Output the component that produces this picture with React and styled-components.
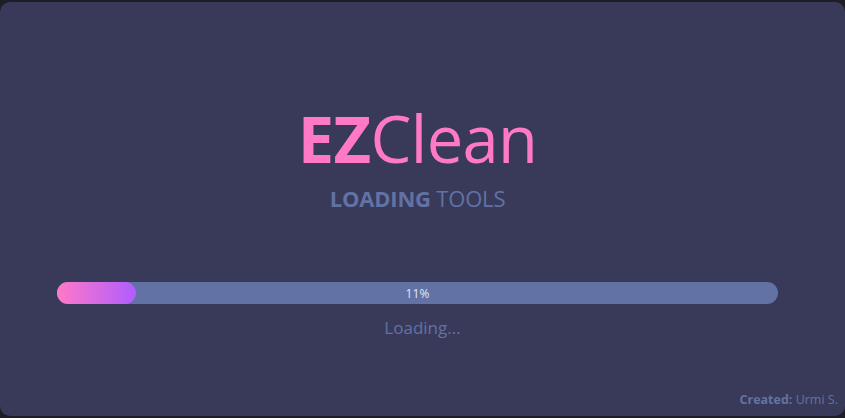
import React from "react";
import styled, { createGlobalStyle } from "styled-components";

const GlobalStyle = createGlobalStyle`
  html, body {
    margin: 0;
    padding: 0;
    background: #1d1e26;
  }
  body {
    font-family: "Open Sans", "Noto Sans", sans-serif;
  }
`;

const Page = styled.div`
  width: 845px;
  height: 418px;
  padding-top: 2px;
  box-sizing: border-box;
  overflow: hidden;
`;

const Card = styled.div`
  height: 414px;
  box-sizing: border-box;
  background: #393a59;
  border-radius: 10px;
  display: flex;
  flex-direction: column;
  padding: 104px 7px 0 0;
`;

const Content = styled.div`
  display: flex;
  flex-direction: column;
  align-items: center;
  margin: 0 60px 0 57px;
`;

const Logo = styled.h1`
  margin: 0;
  font-size: 65px;
  line-height: 1;
  font-weight: 400;
  color: #ff79c6;
  letter-spacing: -0.6px;

  b {
    font-weight: 700;
  }
`;

const Subtitle = styled.div`
  margin-top: 16px;
  font-size: 22px;
  line-height: 22px;
  color: #6272a4;
  letter-spacing: -0.2px;

  b {
    font-weight: 700;
  }
`;

const Track = styled.div`
  position: relative;
  margin-top: 73px;
  width: 721px;
  height: 22px;
  border-radius: 11px;
  background: #6272a4;
  display: flex;
  align-items: center;
  justify-content: center;
`;

const Fill = styled.div`
  position: absolute;
  left: 0;
  top: 0;
  bottom: 0;
  border-radius: 11px;
  background: linear-gradient(90deg, #ff79c6, #b05cff);
`;

const Percent = styled.span`
  position: relative;
  font-size: 12px;
  color: #e6e8f5;
  letter-spacing: 0.2px;
`;

const Status = styled.div`
  margin-top: 12px;
  padding-left: 10px;
  font-size: 17px;
  line-height: 24px;
  color: #6272a4;
`;

const Footer = styled.div`
  margin-top: auto;
  margin-bottom: 8px;
  align-self: flex-end;
  font-size: 12.5px;
  color: #6272a4;

  b {
    font-weight: 700;
  }
`;

export default function App() {
  const progress = 11;
  return (
    <>
      <GlobalStyle />
      <Page>
        <Card>
          <Content>
            <Logo>
              <b>EZ</b>Clean
            </Logo>
            <Subtitle>
              <b>LOADING</b> TOOLS
            </Subtitle>
            <Track>
              <Fill style={{ width: `${progress}%` }} />
              <Percent>{progress}%</Percent>
            </Track>
            <Status>Loading...</Status>
          </Content>
          <Footer>
            <b>Created:</b> Urmi S.
          </Footer>
        </Card>
      </Page>
    </>
  );
}
